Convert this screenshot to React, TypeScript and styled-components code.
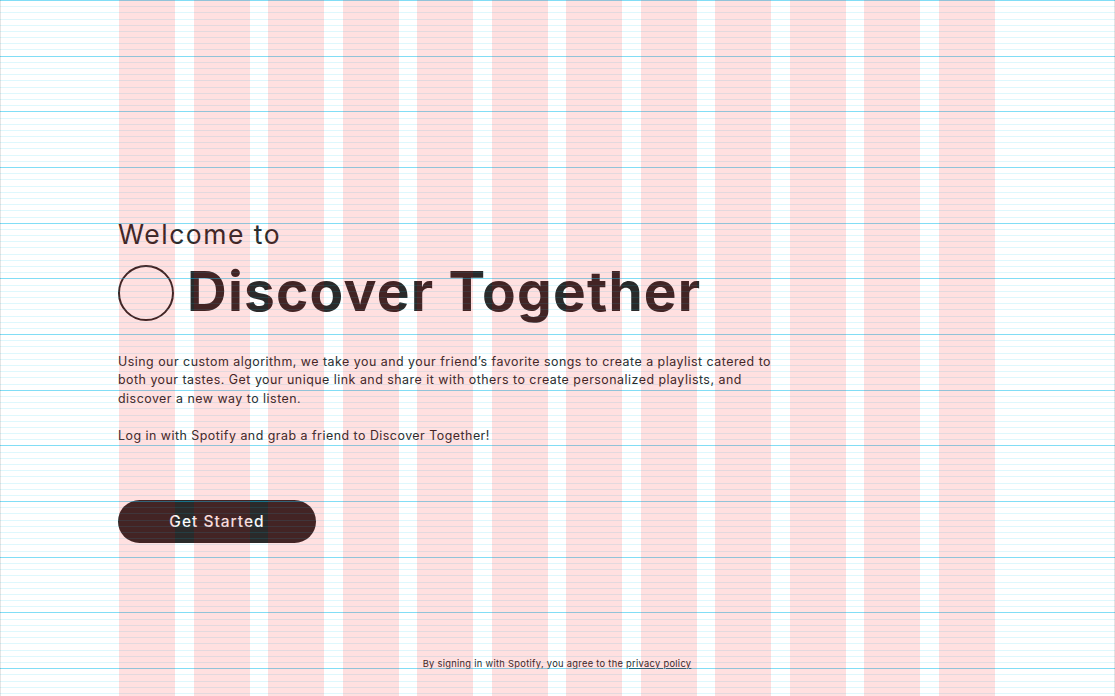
import React from "react";
import styled, { createGlobalStyle } from "styled-components";

const GlobalStyle = createGlobalStyle`
  * { box-sizing: border-box; }
  html, body { margin: 0; padding: 0; background: #ffffff; }
  body { font-family: "Inter", "Noto Sans", sans-serif; color: #2a2a2a; }
`;

const Page = styled.div`
  position: relative;
  min-height: 100vh;
  display: flex;
  flex-direction: column;
  padding: 219px 119px 26px 118px;
`;

const Hero = styled.main`
  display: flex;
  flex-direction: column;
  align-items: flex-start;
`;

const Eyebrow = styled.div`
  font-family: "Inter", sans-serif;
  font-size: 26.5px;
  line-height: 30.6px;
  font-weight: 400;
  letter-spacing: 1.5px;
  color: #2a2a2a;
`;

const TitleRow = styled.div`
  display: flex;
  align-items: center;
  gap: 13px;
  margin-top: 15.5px;
`;

const LogoRing = styled.span`
  display: block;
  width: 56px;
  height: 56px;
  border-radius: 50%;
  border: 2px solid #2a2a2a;
  flex: none;
`;

const Title = styled.h1`
  margin: 0;
  padding-bottom: 5px;
  font-family: "Inter", sans-serif;
  font-size: 55px;
  line-height: 50px;
  font-weight: 700;
  letter-spacing: 1.2px;
  color: #2a2a2a;
`;

const Copy = styled.div`
  margin-top: 31.5px;
  max-width: 665px;
  font-family: "Inter", sans-serif;
  font-size: 12.4px;
  line-height: 18.5px;
  letter-spacing: 0.5px;
  color: #2a2a2a;
  p { margin: 0; }
  p + p { margin-top: 18.5px; }
`;

const StartButton = styled.button`
  margin-top: 55px;
  width: 198px;
  height: 43px;
  border: none;
  border-radius: 22px;
  background: #2a2a2a;
  color: #fafafa;
  font-family: "Inter", sans-serif;
  font-size: 15.5px;
  font-weight: 500;
  letter-spacing: 1px;
  cursor: pointer;
`;

const Footer = styled.footer`
  margin-top: auto;
  text-align: center;
  font-family: "Inter", sans-serif;
  font-size: 9.3px;
  line-height: 12px;
  letter-spacing: 0.3px;
  color: #2a2a2a;
  a { color: inherit; text-decoration: underline; }
`;

const GridOverlay = styled.div`
  position: fixed;
  inset: 0;
  pointer-events: none;
  z-index: 10;
  display: flex;
  gap: 18.4px;
  padding: 0 119px 0 118px;
  border-left: 1px solid rgba(0, 0, 0, 0.1);
  border-right: 1px solid rgba(0, 0, 0, 0.1);
  background:
    repeating-linear-gradient(to bottom, rgba(0, 185, 235, 0.42) 0 1px, transparent 1px 8vh),
    repeating-linear-gradient(to bottom, rgba(0, 200, 240, 0.13) 0 1px, transparent 1px calc(8vh / 9));
`;

const GridColumn = styled.div`
  flex: 1;
  background: rgba(255, 0, 0, 0.12);
`;

export default function App() {
  return (
    <>
      <GlobalStyle />
      <Page>
        <Hero>
          <Eyebrow>Welcome to</Eyebrow>
          <TitleRow>
            <LogoRing />
            <Title>Discover Together</Title>
          </TitleRow>
          <Copy>
            <p>
              Using our custom algorithm, we take you and your friend’s favorite songs to create a playlist
              catered to both your tastes. Get your unique link and share it with others to create
              personalized playlists, and discover a new way to listen.
            </p>
            <p>Log in with Spotify and grab a friend to Discover Together!</p>
          </Copy>
          <StartButton>Get Started</StartButton>
        </Hero>
        <Footer>
          By signing in with Spotify, you agree to the <a href="#privacy">privacy policy</a>
        </Footer>
      </Page>
      <GridOverlay>
        {Array.from({ length: 12 }, (_, i) => (
          <GridColumn key={i} />
        ))}
      </GridOverlay>
    </>
  );
}
